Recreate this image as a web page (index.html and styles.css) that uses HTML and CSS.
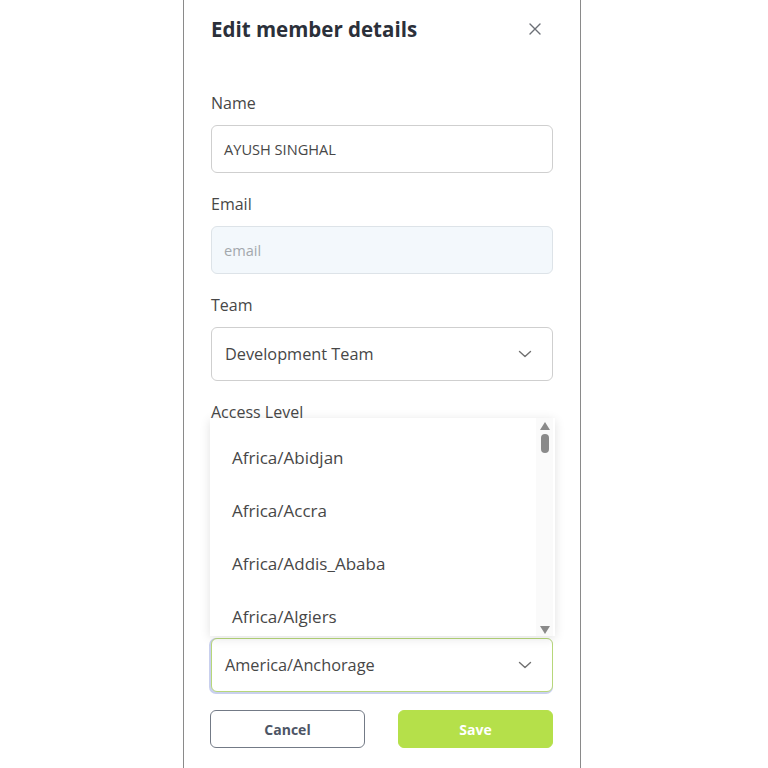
FILE: index.html
```html
<!DOCTYPE html>
<html lang="en">
<head>
<meta charset="utf-8">
<title>Edit member details</title>
<link rel="stylesheet" href="styles.css">
</head>
<body>
<div class="panel">
  <div class="header">
    <h1 class="title">Edit member details</h1>
    <button class="close" aria-label="Close">
      <svg width="14" height="14" viewBox="0 0 14 14"><path d="M2 2L12 12M12 2L2 12" stroke="#6b6f76" stroke-width="1.4" stroke-linecap="round"/></svg>
    </button>
  </div>

  <div class="field first">
    <label class="label">Name</label>
    <div class="input">AYUSH SINGHAL</div>
  </div>

  <div class="field">
    <label class="label">Email</label>
    <div class="input disabled">email</div>
  </div>

  <div class="field">
    <label class="label">Team</label>
    <div class="select">
      <span>Development Team</span>
      <svg class="chev" width="14" height="8" viewBox="0 0 14 8"><path d="M1.5 1.5L7 6.5L12.5 1.5" fill="none" stroke="#707070" stroke-width="1.4" stroke-linecap="round" stroke-linejoin="round"/></svg>
    </div>
  </div>

  <div class="field">
    <label class="label">Access Level</label>
    <div class="select" aria-label="Access Level"></div>
  </div>

  <div class="field tz">
    <div class="select-wrap">
      <div class="menu">
        <div class="options">
          <div class="option">Africa/Abidjan</div>
          <div class="option">Africa/Accra</div>
          <div class="option">Africa/Addis_Ababa</div>
          <div class="option">Africa/Algiers</div>
        </div>
        <div class="scrollbar">
          <span class="arrow up"></span>
          <span class="thumb"></span>
          <span class="track"></span>
          <span class="arrow down"></span>
        </div>
      </div>
      <div class="select focused" aria-label="Timezone">
        <span>America/Anchorage</span>
        <svg class="chev" width="14" height="8" viewBox="0 0 14 8"><path d="M1.5 1.5L7 6.5L12.5 1.5" fill="none" stroke="#707070" stroke-width="1.4" stroke-linecap="round" stroke-linejoin="round"/></svg>
      </div>
    </div>
  </div>

  <div class="actions">
    <button class="btn cancel">Cancel</button>
    <button class="btn save">Save</button>
  </div>
</div>
</body>
</html>
```

FILE: styles.css
```css
html, body {
  margin: 0;
  padding: 0;
  background: #ffffff;
}
body {
  font-family: "Open Sans", "Noto Sans", sans-serif;
  color: #454545;
}
.panel {
  box-sizing: border-box;
  margin-left: 183px;
  width: 398px;
  height: 768px;
  border-left: 1px solid #8a8a8a;
  border-right: 1px solid #8a8a8a;
  padding: 15px 27px 0 27px;
  display: flex;
  flex-direction: column;
}
.header {
  display: flex;
  align-items: center;
  justify-content: space-between;
  height: 28px;
}
.title {
  margin: 0;
  font-size: 20.5px;
  line-height: 28px;
  font-weight: 700;
  color: #2b303a;
}
.close {
  border: 0;
  background: none;
  padding: 0;
  width: 14px;
  height: 14px;
  margin-right: 11px;
  display: flex;
}
.field {
  display: flex;
  flex-direction: column;
  margin-top: 20px;
}
.field.first {
  margin-top: 49px;
}
.label {
  font-size: 16px;
  line-height: 22px;
  color: #474747;
  margin-bottom: 11px;
}
.input {
  box-sizing: border-box;
  height: 48px;
  border: 1px solid #cfcfcf;
  border-radius: 6px;
  padding: 0 12px;
  display: flex;
  align-items: center;
  font-size: 14.6px;
  color: #474747;
}
.input.disabled {
  background: #f3f8fc;
  border-color: #dde3e8;
  color: #a3a8ad;
}
.select {
  box-sizing: border-box;
  height: 54px;
  border: 1px solid #cfcfcf;
  border-radius: 6px;
  padding: 0 20px 0 13px;
  display: flex;
  align-items: center;
  justify-content: space-between;
  font-size: 16.3px;
  color: #474747;
  background: #fff;
}
.select.focused {
  border-color: #b7d77a;
  box-shadow: -1px 1px 0 1px #c9d0ee;
}
.field.tz {
  margin-top: 150px;
}
.select-wrap {
  position: relative;
}
.menu {
  position: absolute;
  left: -1px;
  right: -2px;
  bottom: calc(100% + 2px);
  height: 218px;
  background: #fff;
  box-shadow: 0 2px 10px rgba(0,0,0,0.12);
  display: flex;
  overflow: hidden;
  z-index: 2;
}
.options {
  flex: 1;
  padding-top: 13px;
}
.option {
  height: 53px;
  display: flex;
  align-items: center;
  padding-left: 22px;
  font-size: 17px;
  color: #474747;
}
.scrollbar {
  width: 17px;
  margin-right: 2px;
  background: #fafafa;
  display: flex;
  flex-direction: column;
  align-items: center;
  padding: 4px 0 2px;
  box-sizing: border-box;
}
.arrow {
  width: 0;
  height: 0;
  border-left: 5px solid transparent;
  border-right: 5px solid transparent;
}
.arrow.up {
  border-bottom: 8px solid #8a8a8a;
}
.arrow.down {
  border-top: 8px solid #8a8a8a;
}
.thumb {
  margin-top: 4px;
  width: 8px;
  height: 19px;
  border-radius: 4px;
  background: #8a8a8a;
}
.track {
  flex: 1;
}
.actions {
  display: flex;
  justify-content: space-between;
  margin-top: 18px;
  margin-left: -1px;
}
.btn {
  box-sizing: border-box;
  width: 155px;
  height: 38px;
  border-radius: 6px;
  font-family: "Open Sans", "Noto Sans", sans-serif;
  font-size: 14px;
  font-weight: 700;
}
.cancel {
  background: #fff;
  border: 1px solid #737a86;
  color: #4d5566;
}
.save {
  background: #b5e04a;
  border: 1px solid #b5e04a;
  color: #ffffff;
}
```
